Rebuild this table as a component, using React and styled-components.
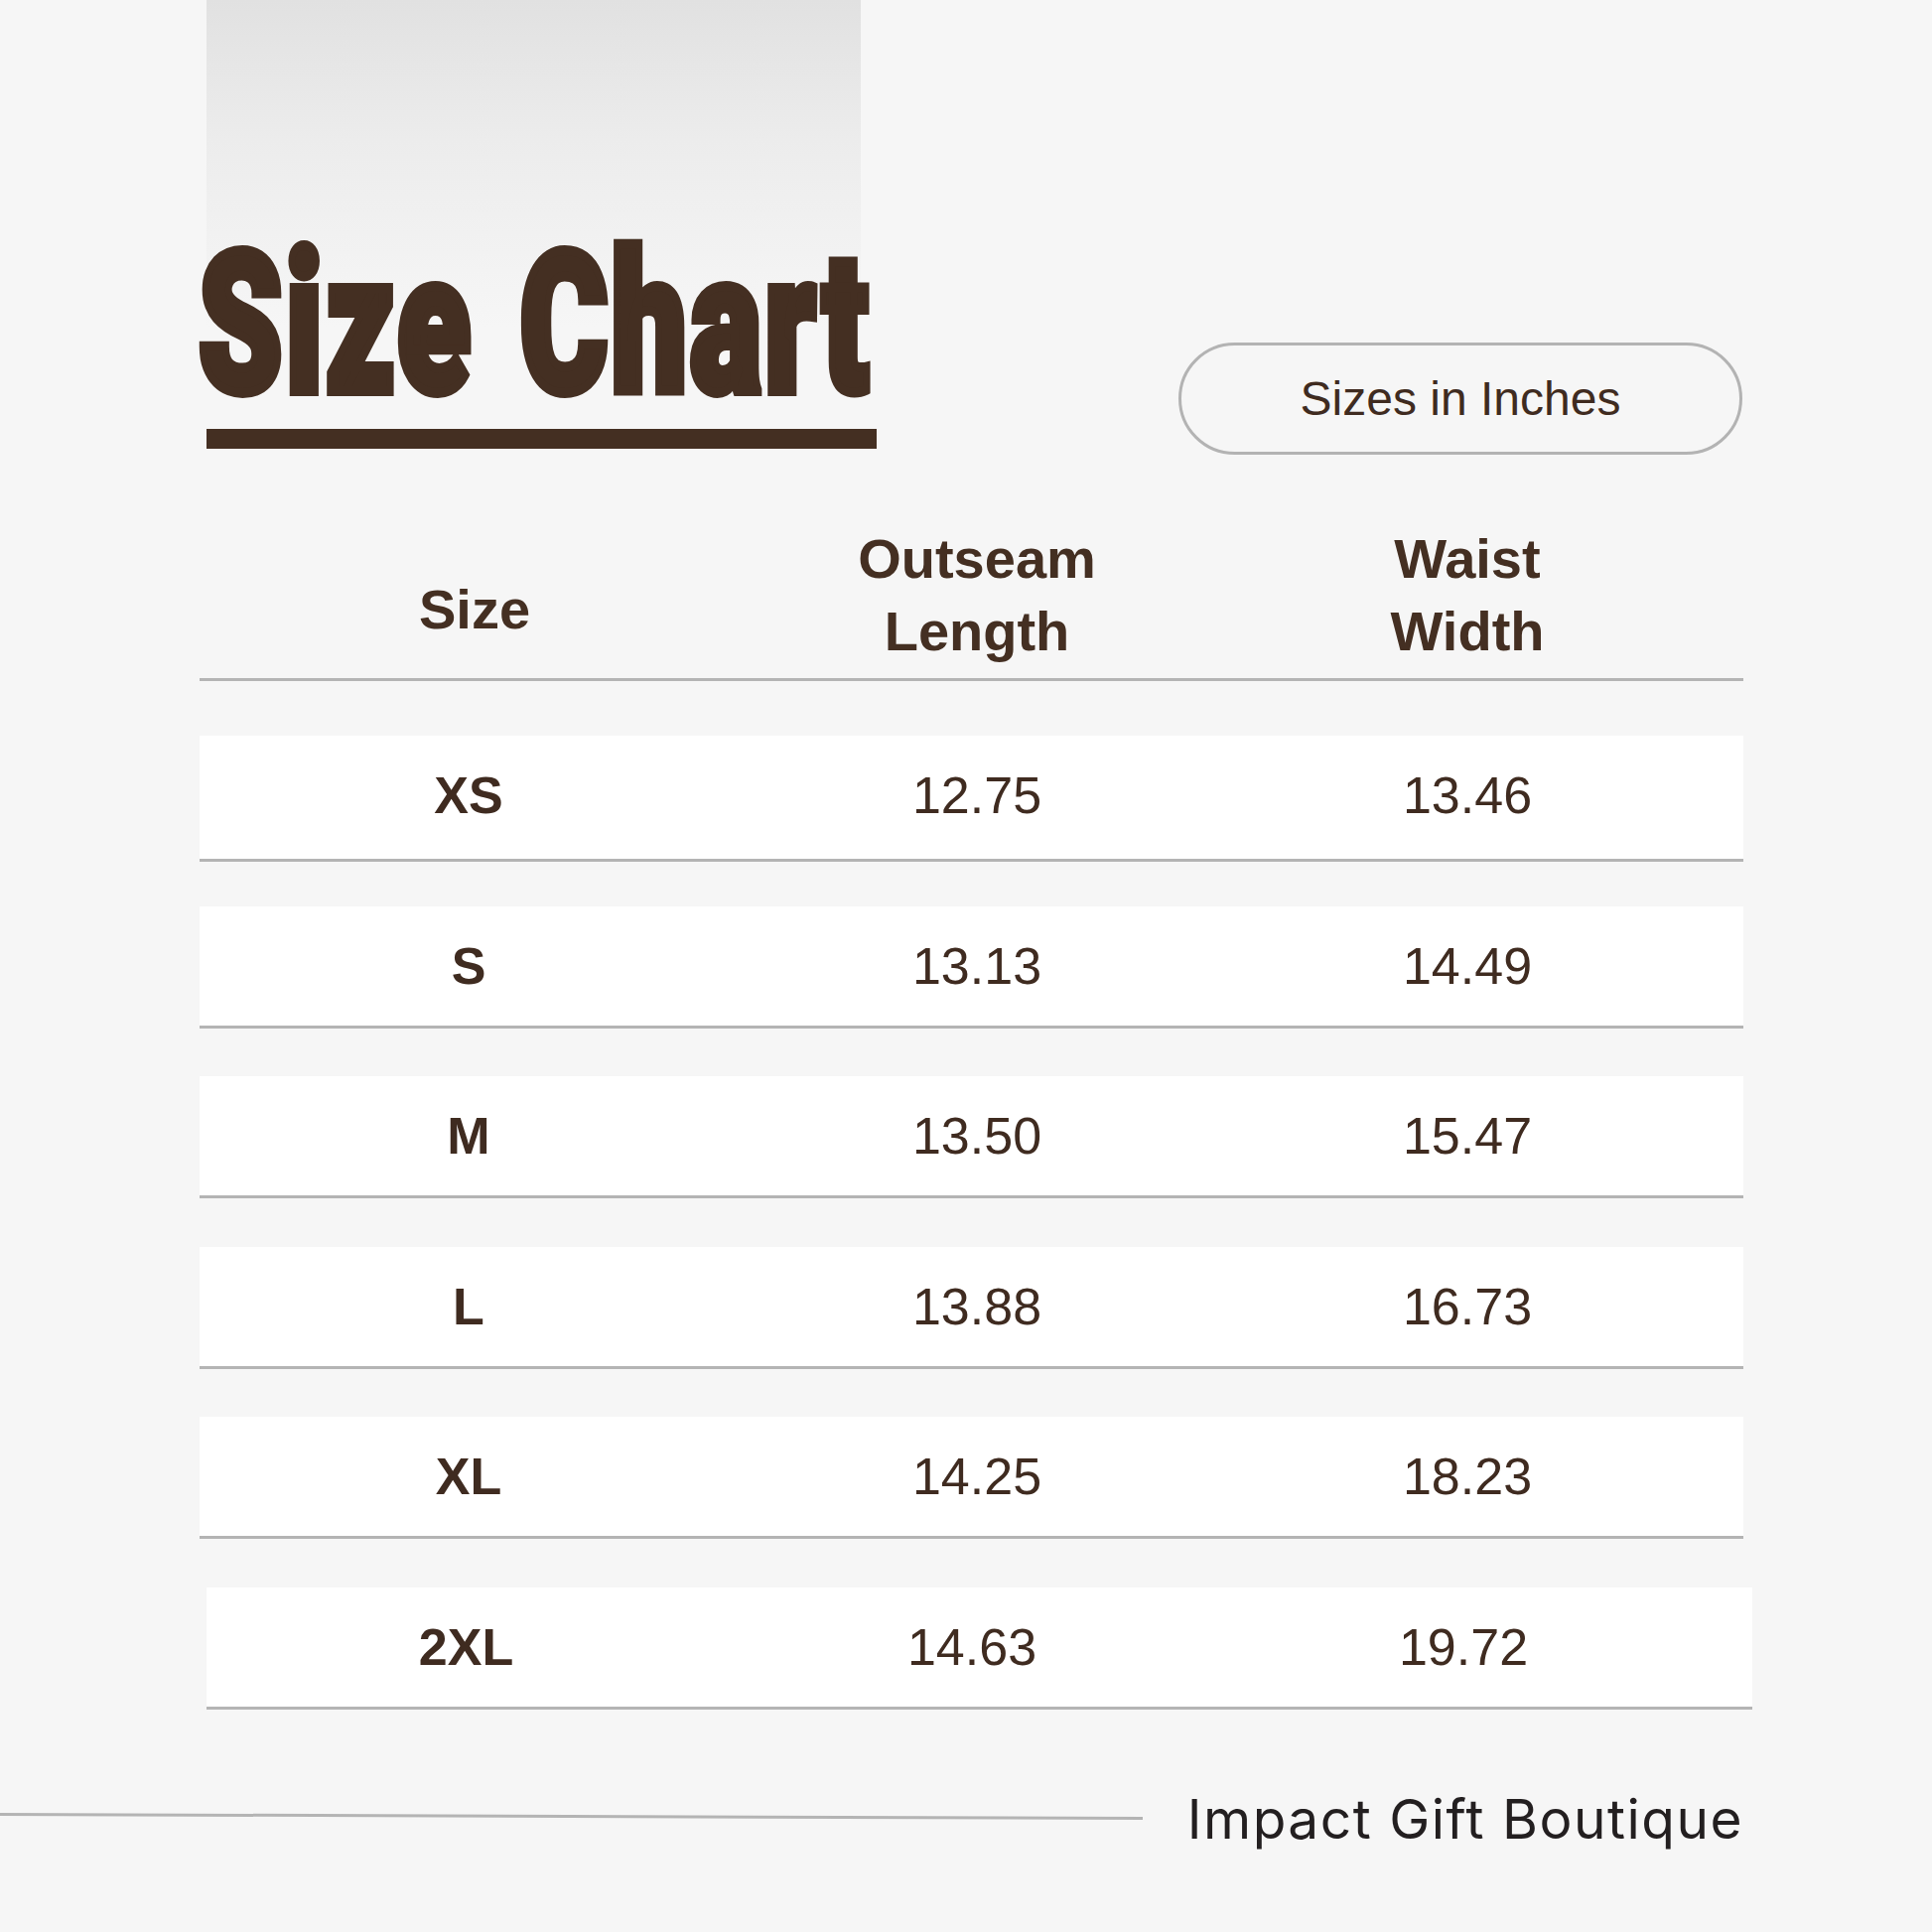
import React from "react";
import styled, { createGlobalStyle } from "styled-components";

const BROWN = "#442f22";
const TEXT = "#3f2b20";
const RULE = "#b4b4b4";

const GlobalStyle = createGlobalStyle`
  html, body {
    margin: 0;
    padding: 0;
    background: #f6f6f6;
  }
`;

const Page = styled.div`
  width: 1946px;
  height: 1946px;
  background: #f6f6f6;
  overflow: hidden;
  display: flex;
  flex-direction: column;
`;

const Content = styled.div`
  padding: 0 190px 0 201px;
`;

const TopArea = styled.div`
  display: flex;
  justify-content: space-between;
  align-items: flex-start;
`;

const TitleBlock = styled.div`
  margin-left: 7px;
  width: 659px;
  padding-top: 229px;
  background: linear-gradient(
    to bottom,
    #e1e1e1 0px,
    #ececec 140px,
    #f6f6f6 330px
  );
`;

const Title = styled.h1`
  margin: 0 0 0 -8px;
  height: 196px;
  font-family: Roboto, "Liberation Sans", sans-serif;
  font-weight: 900;
  font-size: 196px;
  line-height: 196px;
  letter-spacing: 5px;
  word-spacing: 14px;
  color: ${BROWN};
  -webkit-text-stroke: 10px ${BROWN};
  white-space: nowrap;
  transform: scaleX(0.688);
  transform-origin: left center;
`;

const Underbar = styled.div`
  margin-top: 7px;
  width: 675px;
  height: 20px;
  background: ${BROWN};
`;

const Pill = styled.div`
  margin-top: 345px;
  margin-right: 1px;
  width: 568px;
  height: 113px;
  box-sizing: border-box;
  border: 3px solid #b3b3b3;
  border-radius: 57px;
  display: flex;
  align-items: center;
  justify-content: center;
  font-family: "Liberation Sans", Arial, sans-serif;
  font-size: 48px;
  color: ${TEXT};
`;

const COLS = "542px 482px 506px";

const HeadRow = styled.div`
  display: grid;
  grid-template-columns: ${COLS};
  align-items: center;
  margin-top: 68px;
  padding-bottom: 11px;
  border-bottom: 3px solid ${RULE};
`;

const HeadCell = styled.div`
  text-align: center;
  font-family: "Liberation Sans", Arial, sans-serif;
  font-weight: 700;
  font-size: 56px;
  line-height: 73px;
  color: ${BROWN};
  padding-top: ${(p) => p.$drop || 0}px;
  padding-left: ${(p) => p.$nudge || 0}px;
`;

const RowList = styled.div`
  display: flex;
  flex-direction: column;
  gap: 48.5px;
  margin-top: 55px;
`;

const Row = styled.div`
  display: grid;
  grid-template-columns: ${(p) => p.$cols || COLS};
  align-items: center;
  height: ${(p) => (p.$tall ? 127 : 123)}px;
  padding-bottom: ${(p) => (p.$tall ? 4 : 0)}px;
  margin-bottom: ${(p) => (p.$tall ? -4 : 0)}px;
  box-sizing: border-box;
  background: #ffffff;
  border-bottom: 3px solid ${RULE};
  margin-left: ${(p) => (p.$offset ? 7 : 0)}px;
  margin-right: ${(p) => (p.$offset ? -9 : 0)}px;
`;

const Cell = styled.div`
  text-align: center;
  font-family: "Liberation Sans", Arial, sans-serif;
  font-size: 52px;
  font-weight: ${(p) => (p.$bold ? 700 : 400)};
  color: ${TEXT};
`;

const Footer = styled.div`
  display: flex;
  align-items: center;
  gap: 45px;
  padding-right: 190px;
  margin-top: 77px;
`;

const FooterLine = styled.div`
  flex: 1;
  height: 3px;
  background: ${RULE};
  transform: rotate(0.2deg);
  transform-origin: right center;
`;

const Brand = styled.div`
  font-family: Inter, "Noto Sans", sans-serif;
  font-size: 55px;
  letter-spacing: 1.5px;
  color: #231f20;
  white-space: nowrap;
`;

const rows = [
  ["XS", "12.75", "13.46"],
  ["S", "13.13", "14.49"],
  ["M", "13.50", "15.47"],
  ["L", "13.88", "16.73"],
  ["XL", "14.25", "18.23"],
  ["2XL", "14.63", "19.72"],
];

export default function App() {
  return (
    <>
      <GlobalStyle />
      <Page>
        <Content>
          <TopArea>
            <TitleBlock>
              <Title>Size Chart</Title>
              <Underbar />
            </TitleBlock>
            <Pill>Sizes in Inches</Pill>
          </TopArea>

          <HeadRow>
            <HeadCell $drop={28} $nudge={12}>Size</HeadCell>
            <HeadCell>
              Outseam
              <br />
              Length
            </HeadCell>
            <HeadCell>
              Waist
              <br />
              Width
            </HeadCell>
          </HeadRow>

          <RowList>
            {rows.map(([size, outseam, waist], i) => {
              const last = i === rows.length - 1;
              return (
                <Row
                  key={size}
                  $tall={i === 0}
                  $offset={last}
                  $cols={last ? "523px 496px 494px" : undefined}
                >
                  <Cell $bold>{size}</Cell>
                  <Cell>{outseam}</Cell>
                  <Cell>{waist}</Cell>
                </Row>
              );
            })}
          </RowList>
        </Content>

        <Footer>
          <FooterLine />
          <Brand>Impact Gift Boutique</Brand>
        </Footer>
      </Page>
    </>
  );
}
